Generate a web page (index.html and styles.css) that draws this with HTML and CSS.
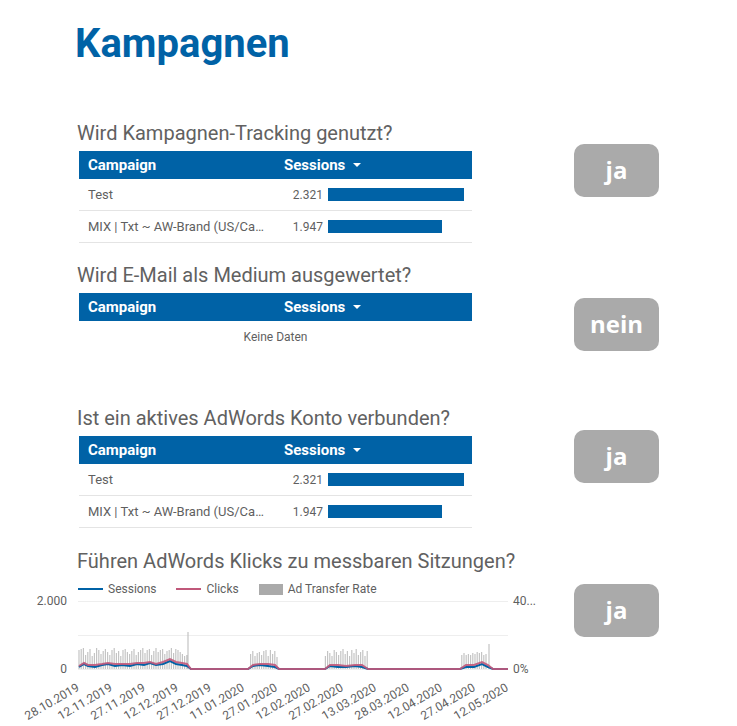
FILE: index.html
```html
<!DOCTYPE html>
<html lang="de">
  <head>
    <meta charset="UTF-8" />
    <meta name="viewport" content="width=device-width, initial-scale=1.0" />
    <title>Kampagnen</title>
    <link rel="stylesheet" href="styles.css">
  </head>
  <body>
    <div class="page">
      <h1 class="title">Kampagnen</h1>

      <div class="section section-1">
        <div class="section-main">
          <h3 class="question">Wird Kampagnen-Tracking genutzt?</h3>
          <div class="tbl">
            <div class="tbl-head">
              <div class="col-name">Campaign</div>
              <div class="col-val">Sessions <span class="sort"></span></div>
            </div>
            <div class="tbl-row">
              <div class="col-name">Test</div>
              <div class="col-val"><span class="num">2.321</span><span class="bar" style="width: 136px"></span></div>
            </div>
            <div class="tbl-row">
              <div class="col-name">MIX | Txt ~ AW-Brand (US/Canada) Exact</div>
              <div class="col-val"><span class="num">1.947</span><span class="bar" style="width: 114px"></span></div>
            </div>
          </div>
        </div>
        <div class="badge badge-1">ja</div>
      </div>

      <div class="section section-2">
        <div class="section-main">
          <h3 class="question">Wird E-Mail als Medium ausgewertet?</h3>
          <div class="tbl">
            <div class="tbl-head">
              <div class="col-name">Campaign</div>
              <div class="col-val">Sessions <span class="sort"></span></div>
            </div>
            <div class="tbl-empty">Keine Daten</div>
          </div>
        </div>
        <div class="badge badge-2">nein</div>
      </div>

      <div class="section section-3">
        <div class="section-main">
          <h3 class="question">Ist ein aktives AdWords Konto verbunden?</h3>
          <div class="tbl">
            <div class="tbl-head">
              <div class="col-name">Campaign</div>
              <div class="col-val">Sessions <span class="sort"></span></div>
            </div>
            <div class="tbl-row">
              <div class="col-name">Test</div>
              <div class="col-val"><span class="num">2.321</span><span class="bar" style="width: 136px"></span></div>
            </div>
            <div class="tbl-row">
              <div class="col-name">MIX | Txt ~ AW-Brand (US/Canada) Exact</div>
              <div class="col-val"><span class="num">1.947</span><span class="bar" style="width: 114px"></span></div>
            </div>
          </div>
        </div>
        <div class="badge badge-3">ja</div>
      </div>

      <div class="section section-4">
        <div class="section-main">
          <h3 class="question">Führen AdWords Klicks zu messbaren Sitzungen?</h3>
          <div class="legend">
            <span class="legend-item"><span class="swatch swatch-sessions"></span>Sessions</span>
            <span class="legend-item"><span class="swatch swatch-clicks"></span>Clicks</span>
            <span class="legend-item"><span class="swatch swatch-rate"></span>Ad Transfer Rate</span>
          </div>
          <!-- viewBox uses page coordinates -->
          <svg class="chart" width="540" height="117" viewBox="0 597 540 117">
            <g class="grid">
              <line x1="78" y1="601.5" x2="508" y2="601.5" />
              <line x1="78" y1="635.5" x2="508" y2="635.5" />
              <line x1="78" y1="669.5" x2="508" y2="669.5" />
            </g>
            <g class="axis">
              <text x="67" y="605" text-anchor="end">2.000</text>
              <text x="67" y="673" text-anchor="end">0</text>
              <text x="513" y="605">40...</text>
              <text x="513" y="673">0%</text>
            </g>
            <path class="bars" d="M79 669V650M81.2 669V649M83.4 669V648M85.6 669V655M87.8 669V652M90 669V649M92.2 669V656M94.4 669V653M96.6 669V648M98.8 669V650M101 669V654M103.2 669V651M105.4 669V649M107.6 669V652M109.8 669V655M112 669V650M114.2 669V648M116.4 669V653M118.6 669V651M120.8 669V656M123 669V650M125.2 669V649M127.4 669V652M129.6 669V654M131.8 669V651M134 669V649M136.2 669V655M138.4 669V652M140.6 669V650M142.8 669V648M145 669V653M147.2 669V650M149.4 669V649M151.6 669V655M153.8 669V651M156 669V648M158.2 669V652M160.4 669V650M162.6 669V649M164.8 669V654M167 669V651M169.2 669V650M171.4 669V648M173.6 669V653M175.8 669V649M178 669V650M180.2 669V652M182.4 669V654M184.6 669V656M186.8 669V655M188 669V632
              M250.6 669V654M252.8 669V651M255 669V656M257.2 669V653M259.4 669V652M261.6 669V655M263.8 669V651M266 669V650M268.2 669V656M270.4 669V650M272.6 669V654M274.8 669V651M277 669V657
              M325.4 669V656M327.6 669V651M329.8 669V653M332 669V656M334.2 669V650M336.4 669V652M338.6 669V655M340.8 669V651M343 669V649M345.2 669V654M347.4 669V651M349.6 669V656M351.8 669V650M354 669V653M356.2 669V649M358.4 669V655M360.6 669V652M362.8 669V650M365 669V656M367.2 669V651
              M461.8 669V655M464 669V653M466.2 669V655M468.4 669V654M470.6 669V655M472.8 669V653M475 669V654M477.2 669V652M479.4 669V653M481.6 669V652M483.8 669V655M486 669V654M489 669V644" />
            <polyline class="line-sessions" points="79,667 84,664 88,666 95,667 102,665 108,664 115,666 122,665 130,666 137,664 144,665 150,663 156,665 163,664 170,661 176,664 182,665 187,666 191,669 248,669 253,666 260,665 268,666 275,667 279,669 325,669 330,666 338,667 346,667 355,666 362,667 368,669 460,669 466,667 474,667 482,664 488,667 493,669 508,669" />
            <polyline class="line-clicks" points="79,666 84,663 88,665 95,665 102,664 108,663 115,664 122,664 130,664 137,663 144,663 150,662 156,664 163,662 170,659 176,662 182,663 187,664 191,669 248,669 253,665 260,664 268,664 275,665 279,669 325,669 330,665 338,665 346,666 355,665 362,665 368,669 460,669 466,665 474,665 482,662 488,665 493,669 508,669" />
            <g class="axis">
              <text transform="translate(80 690) rotate(-30)" text-anchor="end">28.10.2019</text>
              <text transform="translate(113 690) rotate(-30)" text-anchor="end">12.11.2019</text>
              <text transform="translate(146 690) rotate(-30)" text-anchor="end">27.11.2019</text>
              <text transform="translate(179 690) rotate(-30)" text-anchor="end">12.12.2019</text>
              <text transform="translate(212 690) rotate(-30)" text-anchor="end">27.12.2019</text>
              <text transform="translate(245 690) rotate(-30)" text-anchor="end">11.01.2020</text>
              <text transform="translate(278 690) rotate(-30)" text-anchor="end">27.01.2020</text>
              <text transform="translate(311 690) rotate(-30)" text-anchor="end">12.02.2020</text>
              <text transform="translate(344 690) rotate(-30)" text-anchor="end">27.02.2020</text>
              <text transform="translate(377 690) rotate(-30)" text-anchor="end">13.03.2020</text>
              <text transform="translate(410 690) rotate(-30)" text-anchor="end">28.03.2020</text>
              <text transform="translate(443 690) rotate(-30)" text-anchor="end">12.04.2020</text>
              <text transform="translate(476 690) rotate(-30)" text-anchor="end">27.04.2020</text>
              <text transform="translate(509 690) rotate(-30)" text-anchor="end">12.05.2020</text>
            </g>
          </svg>
        </div>
        <div class="badge badge-4">ja</div>
      </div>

      <h2 class="subtitle">Keywords</h2>
    </div>
  </body>
</html>
```

FILE: styles.css
```css
* {
  box-sizing: border-box;
}
body {
  margin: 0;
  background-color: #fff;
  font-family: Roboto, "Liberation Sans", sans-serif;
  color: #5f5f5f;
}
.page {
  padding: 20px 0 0 77px;
}
.title {
  margin: 0 0 0 -2px;
  font-size: 40px;
  line-height: 48px;
  font-weight: 700;
  color: #0062a6;
}
.subtitle {
  margin: 5px 0 0 -2px;
  font-size: 40px;
  line-height: 48px;
  font-weight: 700;
  color: #0062a6;
}
.section {
  display: flex;
  align-items: flex-start;
}
.section-1 {
  margin-top: 53px;
}
.section-2 {
  margin-top: 20px;
}
.section-3 {
  margin-top: 21px;
}
.section-4 {
  margin-top: 21px;
}
.section-main {
  width: 396px;
  flex: none;
}
.question {
  margin: 0 0 6px 0;
  font-size: 20px;
  line-height: 24px;
  font-weight: 400;
  color: #616161;
  white-space: nowrap;
}
.tbl {
  margin-left: 2px;
  width: 393px;
  height: 92px;
}
.tbl-head {
  display: flex;
  height: 28px;
  align-items: center;
  background-color: #0062a6;
  color: #fff;
  font-size: 15px;
  font-weight: 700;
}
.tbl-row {
  display: flex;
  height: 32px;
  align-items: center;
  border-bottom: 1px solid #e4e4e4;
  font-size: 13px;
  color: #5f5f5f;
}
.col-name {
  width: 197px;
  padding: 0 9px;
  white-space: nowrap;
  overflow: hidden;
  text-overflow: ellipsis;
}
.col-val {
  flex: 1;
  display: flex;
  align-items: center;
  padding-left: 8px;
}
.sort {
  margin-left: 8px;
  width: 0;
  height: 0;
  border-left: 4px solid transparent;
  border-right: 4px solid transparent;
  border-top: 4px solid #fff;
}
.num {
  width: 39px;
  text-align: right;
  font-size: 12px;
}
.bar {
  margin-left: 5px;
  height: 13px;
  background-color: #0062a6;
}
.tbl-empty {
  padding-top: 8px;
  text-align: center;
  font-size: 12px;
  line-height: 16px;
  color: #5f5f5f;
}
.badge {
  flex: none;
  margin-left: 101px;
  width: 85px;
  height: 53px;
  display: flex;
  align-items: center;
  justify-content: center;
  padding-bottom: 3px;
  border-radius: 10px;
  background-color: #aaaaaa;
  color: #fff;
  font-family: "Open Sans", sans-serif;
  font-size: 24px;
  font-weight: 700;
}
.badge-1 {
  margin-top: 23px;
}
.badge-2 {
  margin-top: 35px;
}
.badge-3 {
  margin-top: 24px;
}
.badge-4 {
  margin-top: 35px;
}
.legend {
  display: flex;
  margin: 8px 0 0 1px;
  font-size: 12px;
  line-height: 16px;
  color: #5f5f5f;
}
.legend-item {
  display: flex;
  align-items: center;
  margin-right: 20px;
}
.swatch {
  display: inline-block;
  margin-right: 5px;
}
.swatch-sessions,
.swatch-clicks {
  width: 25px;
  height: 2px;
}
.swatch-sessions {
  background-color: #0062a6;
}
.swatch-clicks {
  background-color: #c0587a;
}
.swatch-rate {
  width: 24px;
  height: 11px;
  background-color: #aaaaaa;
}
.chart {
  display: block;
  margin-left: -77px;
  overflow: visible;
}
.grid line {
  stroke: #eeeeee;
  stroke-width: 1;
}
.axis text {
  font-family: Roboto, "Liberation Sans", sans-serif;
  font-size: 12px;
  fill: #5f5f5f;
}
.bars {
  stroke: #c4c4c4;
  stroke-width: 1.2;
  fill: none;
}
.line-sessions {
  fill: none;
  stroke: #0062a6;
  stroke-width: 2;
}
.line-clicks {
  fill: none;
  stroke: #c0587a;
  stroke-width: 2;
  stroke-opacity: 0.9;
}
```
